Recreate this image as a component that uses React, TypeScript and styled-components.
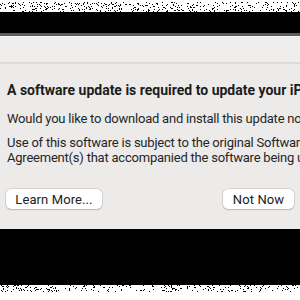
import React from "react";
import styled, { createGlobalStyle } from "styled-components";

const Global = createGlobalStyle`
  html, body { margin: 0; padding: 0; background: #ffffff; }
  body { width: 300px; height: 300px; overflow: hidden; }
`;

const Page = styled.div`
  width: 300px;
  height: 300px;
  display: flex;
  flex-direction: column;
  overflow: hidden;
  font-family: Roboto, "Liberation Sans", sans-serif;
`;

const NoiseStrip = styled.div<{ $h: number }>`
  height: ${(p) => p.$h}px;
  flex: none;
  background: #ffffff;
  line-height: 0;
`;

const BlackBand = styled.div<{ $h: number }>`
  height: ${(p) => p.$h}px;
  flex: none;
  background: #000000;
`;

const Dialog = styled.div`
  flex: none;
  height: 196px;
  display: flex;
  flex-direction: column;
  background: #ecebea;
  border-top: 3px solid #5e5e5e;
  box-sizing: border-box;
`;

const TitleBar = styled.div`
  height: 25px;
  flex: none;
  background: #efeeed;
  border-top: 1px solid #f6f6f5;
  border-bottom: 2px solid #dddcdb;
`;

const Body = styled.div`
  flex: 1;
  display: flex;
  flex-direction: column;
  padding: 17px 0 0 7px;
  white-space: nowrap;
  overflow: hidden;
`;

const Title = styled.div`
  font-size: 14px;
  font-weight: 700;
  color: #1c1c1c;
  line-height: 18px;
  letter-spacing: 0px;
`;

const Text = styled.div<{ $mt: number }>`
  margin-top: ${(p) => p.$mt}px;
  font-size: 13px;
  color: #262626;
  line-height: 15px;
  letter-spacing: -0.22px;
`;

const ButtonRow = styled.div`
  margin-top: 24px;
  display: flex;
  justify-content: space-between;
  padding-right: 6px;
  margin-left: -1px;
`;

const Button = styled.div<{ $w: number }>`
  width: ${(p) => p.$w}px;
  height: 20px;
  box-sizing: border-box;
  background: #ffffff;
  border-radius: 5px;
  box-shadow: 0 0 0 0.5px rgba(0, 0, 0, 0.18), 0 1px 1.5px rgba(0, 0, 0, 0.14);
  display: flex;
  align-items: center;
  justify-content: center;
  font-size: 13px;
  color: #222222;
  letter-spacing: 0.1px;
`;

function rand(seed: number) {
  let s = seed;
  return () => {
    s = (s * 9301 + 49297) % 233280;
    return s / 233280;
  };
}

function Noise({ h, seed, from, to }: { h: number; seed: number; from: number; to: number }) {
  const r = rand(seed);
  const dots: React.ReactElement[] = [];
  for (let x = 0; x < 300; x++) {
    for (let y = from; y < to; y++) {
      if (r() < 0.12) dots.push(<rect key={x + "-" + y} x={x} y={y} width={1} height={1} fill="#000" />);
    }
  }
  return (
    <svg width={300} height={h} viewBox={`0 0 300 ${h}`}>
      {dots}
    </svg>
  );
}

export default function App() {
  return (
    <Page>
      <Global />
      <NoiseStrip $h={12}>
        <Noise h={12} seed={7} from={2} to={12} />
      </NoiseStrip>
      <BlackBand $h={21} />
      <Dialog>
        <TitleBar />
        <Body>
          <Title>A software update is required to update your iPhone.</Title>
          <Text $mt={12}>Would you like to download and install this update now?</Text>
          <Text $mt={9}>Use of this software is subject to the original Software License</Text>
          <Text $mt={0}>Agreement(s) that accompanied the software being updated.</Text>
          <ButtonRow>
            <Button $w={96}>Learn More...</Button>
            <Button $w={71}>Not Now</Button>
          </ButtonRow>
        </Body>
      </Dialog>
      <BlackBand $h={56} />
      <NoiseStrip $h={15}>
        <Noise h={15} seed={13} from={0} to={7} />
      </NoiseStrip>
    </Page>
  );
}
